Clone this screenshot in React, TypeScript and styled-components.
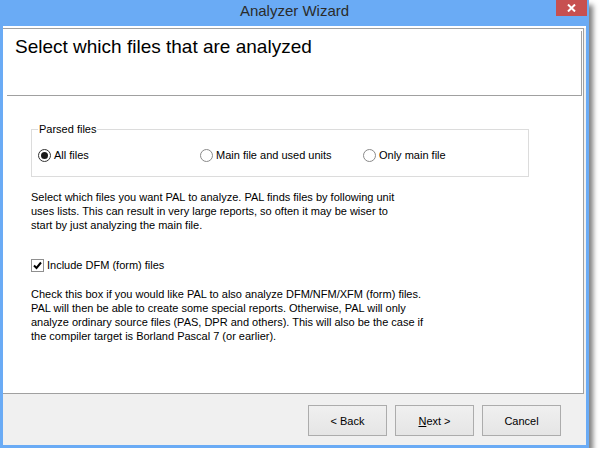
import styled, { createGlobalStyle } from "styled-components";

const GlobalStyle = createGlobalStyle`
  html, body {
    margin: 0;
    padding: 0;
    background: #ffffff;
  }
  body {
    font-family: "Liberation Sans", Arial, sans-serif;
    font-size: 11px;
    color: #000000;
  }
`;

const Window = styled.div`
  width: 589px;
  height: 448px;
  box-sizing: border-box;
  padding: 0 3px 3px 3px;
  background: #6aabf5;
  display: flex;
  flex-direction: column;
  box-shadow: 4px 5px 5px rgba(0, 0, 0, 0.5);
`;

const TitleBar = styled.div`
  height: 26px;
  flex: none;
  display: flex;
  justify-content: center;
  position: relative;
`;

const Caption = styled.div`
  padding-top: 2px;
  line-height: 18px;
  font-size: 15px;
  color: #2b2b2b;
`;

const CloseButton = styled.div`
  position: absolute;
  top: 0;
  right: -1px;
  width: 31px;
  height: 16px;
  background: #c75050;
  display: flex;
  align-items: center;
  justify-content: center;
`;

const Client = styled.div`
  flex: 1;
  display: flex;
  flex-direction: column;
  background: #f0f0f0;
  border-top: 2px solid #ffffff;
`;

const Page = styled.div`
  flex: 1;
  background: #ffffff;
  border: 1px solid #a0a0a0;
  border-left: none;
  margin-right: 2px;
  display: flex;
  flex-direction: column;
`;

const Header = styled.div`
  margin: 2px 1px 0 4px;
  height: 59px;
  padding: 5px 0 0 8px;
  box-sizing: content-box;
  border-right: 1px solid #a0a0a0;
  border-bottom: 1px solid #a0a0a0;
`;

const HeaderTitle = styled.div`
  font-size: 19px;
  line-height: 22px;
`;

const Content = styled.div`
  padding: 0 0 0 28px;
  display: flex;
  flex-direction: column;
`;

const GroupBox = styled.fieldset`
  margin: 26px 0 0 0;
  width: 498px;
  box-sizing: border-box;
  border: 1px solid #dcdcdc;
  padding: 12px 6px 14px 6px;
  min-width: 0;
`;

const Legend = styled.legend`
  padding: 0 1px;
  line-height: 14px;
  font-size: 11px;
`;

const RadioRow = styled.div`
  display: grid;
  grid-template-columns: 162px 163px 1fr;
`;

const Option = styled.label`
  display: flex;
  align-items: center;
  gap: 3px;
  line-height: 14px;
`;

const RadioCircle = styled.span<{ $checked?: boolean }>`
  width: 13px;
  height: 13px;
  box-sizing: border-box;
  border-radius: 50%;
  border: 1px solid ${(p) => (p.$checked ? "#333333" : "#8a8a8a")};
  background: #ffffff;
  display: flex;
  align-items: center;
  justify-content: center;
  &::after {
    content: "";
    width: 7px;
    height: 7px;
    border-radius: 50%;
    background: ${(p) => (p.$checked ? "#1a1a1a" : "transparent")};
  }
`;

const Paragraph = styled.p<{ $top: number }>`
  margin: ${(p) => p.$top}px 0 0 0;
  line-height: 14px;
  white-space: nowrap;
`;

const CheckRow = styled.label`
  margin-top: 26px;
  display: flex;
  align-items: center;
  gap: 3px;
  line-height: 14px;
`;

const CheckBox = styled.span`
  width: 13px;
  height: 13px;
  box-sizing: border-box;
  border: 1px solid #8f8f8f;
  background: #ffffff;
  display: flex;
  align-items: center;
  justify-content: center;
`;

const Footer = styled.div`
  height: 51px;
  flex: none;
  box-sizing: border-box;
  padding: 11px 25px 0 0;
  display: flex;
  justify-content: flex-end;
  gap: 8px;
`;

const Button = styled.button`
  width: 79px;
  height: 31px;
  border: 1px solid #acacac;
  background: linear-gradient(#f0f0f0, #e5e5e5);
  font-family: "Liberation Sans", Arial, sans-serif;
  font-size: 11px;
  color: #000000;
  padding: 0;
`;

export default function App() {
  return (
    <>
      <GlobalStyle />
      <Window>
        <TitleBar>
          <Caption>Analyzer Wizard</Caption>
          <CloseButton>
            <svg width="9" height="8" viewBox="0 0 9 8">
              <path d="M1 0.5 L8 7.5 M8 0.5 L1 7.5" stroke="#ffffff" strokeWidth="2" />
            </svg>
          </CloseButton>
        </TitleBar>
        <Client>
          <Page>
            <Header>
              <HeaderTitle>Select which files that are analyzed</HeaderTitle>
            </Header>
            <Content>
              <GroupBox>
                <Legend>Parsed files</Legend>
                <RadioRow>
                  <Option>
                    <RadioCircle $checked />
                    All files
                  </Option>
                  <Option>
                    <RadioCircle />
                    Main file and used units
                  </Option>
                  <Option>
                    <RadioCircle />
                    Only main file
                  </Option>
                </RadioRow>
              </GroupBox>
              <Paragraph $top={13}>
                Select which files you want PAL to analyze. PAL finds files by following unit
                <br />
                uses lists. This can result in very large reports, so often it may be wiser to
                <br />
                start by just analyzing the main file.
              </Paragraph>
              <CheckRow>
                <CheckBox>
                  <svg width="9" height="9" viewBox="0 0 9 9">
                    <path d="M1 4.5 L3.5 7 L8 1.5" stroke="#000000" strokeWidth="2" fill="none" />
                  </svg>
                </CheckBox>
                Include DFM (form) files
              </CheckRow>
              <Paragraph $top={15}>
                Check this box if you would like PAL to also analyze DFM/NFM/XFM (form) files.
                <br />
                PAL will then be able to create some special reports. Otherwise, PAL will only
                <br />
                analyze ordinary source files (PAS, DPR and others). This will also be the case if
                <br />
                the compiler target is Borland Pascal 7 (or earlier).
              </Paragraph>
            </Content>
          </Page>
          <Footer>
            <Button>&lt; Back</Button>
            <Button>
              <u>N</u>ext &gt;
            </Button>
            <Button>Cancel</Button>
          </Footer>
        </Client>
      </Window>
    </>
  );
}
